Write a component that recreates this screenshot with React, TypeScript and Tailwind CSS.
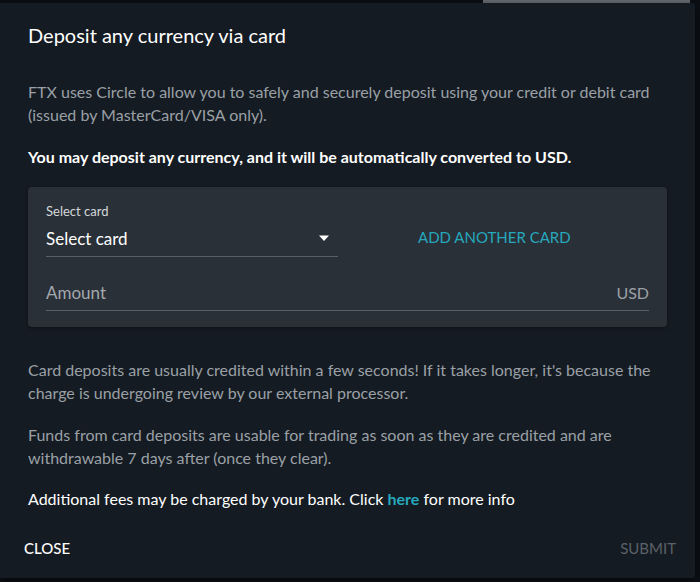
export default function App() {
  return (
    <div className="relative h-[582px] w-[700px] overflow-hidden bg-[#0c1015] font-['Lato',sans-serif]">
      {/* page strip peeking above the dialog */}
      <div className="absolute right-[10px] top-0 h-[3px] w-[207px] bg-[#6b7178]" />

      <div className="relative mt-[3px] flex h-[575px] w-[695px] flex-col rounded-r-[3px] bg-[#151b22] shadow-[0_2px_10px_rgba(0,0,0,0.6)]">
        <div className="px-[28px] pt-[18px]">
          <h2 className="text-[20px] leading-[28px] text-white">Deposit any currency via card</h2>

          <p className="mt-[31px] text-[16px] leading-[23px] text-[#9aa0a6]">
            FTX uses Circle to allow you to safely and securely deposit using your credit or debit card
            (issued by MasterCard/VISA only).
          </p>

          <p className="mt-[19px] text-[16px] font-bold leading-[23px] text-white">
            You may deposit any currency, and it will be automatically converted to USD.
          </p>

          {/* FORM CARD */}
          <div className="mt-[19px] rounded-[4px] bg-[#2a3038] px-[18px] pb-[16px] pt-[17px] shadow-[0_1px_3px_rgba(0,0,0,0.4)]">
            <div className="flex items-end">
              <div className="w-[292px]">
                <div className="text-[13px] leading-[15px] text-[#d5d8db]">Select card</div>
                <div className="mt-[4px] flex h-[34px] items-center justify-between border-b border-[#5a6067] pb-[2px]">
                  <span className="text-[17px] text-white">Select card</span>
                  <svg width="12" height="7" viewBox="0 0 12 7" className="mr-[8px]">
                    <path d="M1 0.5h10L6 6z" fill="#ffffff" />
                  </svg>
                </div>
              </div>
              <button className="mb-[10px] ml-[80px] text-[15px] leading-[20px] text-[#26a8bd]">
                ADD ANOTHER CARD
              </button>
            </div>

            <div className="mt-[20px] flex h-[34px] items-center justify-between border-b border-[#5a6067] pb-[2px]">
              <span className="text-[17px] text-[#a3a8ad]">Amount</span>
              <span className="text-[16px] text-[#9aa0a6]">USD</span>
            </div>
          </div>

          <p className="mt-[31px] text-[16px] leading-[23px] text-[#9aa0a6]">
            Card deposits are usually credited within a few seconds! If it takes longer, it's because the
            charge is undergoing review by our external processor.
          </p>

          <p className="mt-[19px] text-[16px] leading-[23px] text-[#9aa0a6]">
            Funds from card deposits are usable for trading as soon as they are credited and are
            withdrawable 7 days after (once they clear).
          </p>

          <p className="mt-[18px] text-[16px] leading-[23px] text-white">
            Additional fees may be charged by your bank. Click{" "}
            <a className="font-bold text-[#26a8bd]">here</a> for more info
          </p>
        </div>

        <div className="mt-auto flex items-center justify-between pb-[19px] pl-[24px] pr-[19px]">
          <button className="text-[15px] font-medium text-white">CLOSE</button>
          <button className="text-[15px] text-[#5b6168]">SUBMIT</button>
        </div>
      </div>
    </div>
  );
}
